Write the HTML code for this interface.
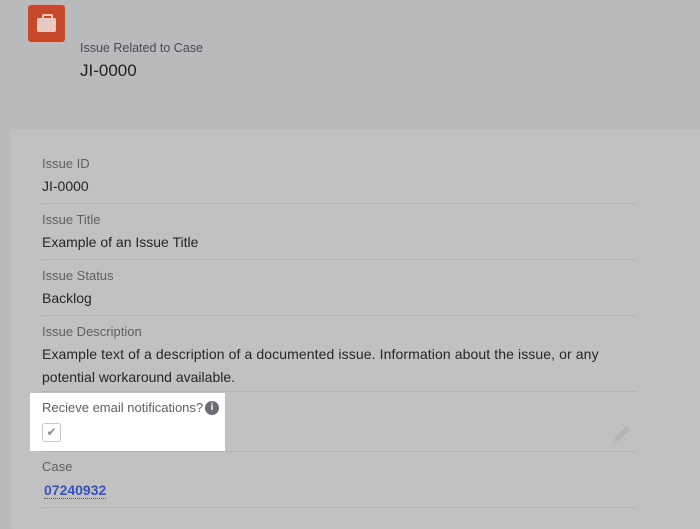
<!DOCTYPE html>
<html><head><style>
body{margin:0;width:700px;height:522px;background:#b9babc;font-family:"Liberation Sans",sans-serif;position:relative;overflow:hidden}
.icon{position:absolute;left:28px;top:5px;width:37px;height:37px;background:#c5492a;border-radius:3px}
.t{position:absolute;white-space:nowrap}
.card{position:absolute;left:10px;top:129px;width:700px;height:400px;background:#c1c1c1;border-radius:4px}
.line{position:absolute;left:42px;width:595px;height:1px;background:#b3b3b3}
.lab{color:#5f5f62;font-size:13px}
.val{color:#26262a;font-size:14px}
</style></head><body>
<div class="icon"><div style="position:absolute;left:9px;top:13px;width:19px;height:14px;background:#e8c9c0;border-radius:2px"></div><div style="position:absolute;left:14px;top:9px;width:7px;height:4px;border:2px solid #e8c9c0;border-bottom:none;border-radius:2px 2px 0 0"></div></div>
<div class="t" style="left:80px;top:41px;font-size:12.5px;color:#4a4a50">Issue Related to Case</div>
<div class="t" style="left:80px;top:61px;font-size:17px;color:#222">JI-0000</div>
<div class="card"></div>
<div class="t lab" style="left:42px;top:156px">Issue ID</div>
<div class="t val" style="left:42px;top:178px">JI-0000</div>
<div class="line" style="top:203px"></div>
<div class="t lab" style="left:42px;top:212px">Issue Title</div>
<div class="t val" style="left:42px;top:234px">Example of an Issue Title</div>
<div class="line" style="top:259px"></div>
<div class="t lab" style="left:42px;top:268px">Issue Status</div>
<div class="t val" style="left:42px;top:290px">Backlog</div>
<div class="line" style="top:315px"></div>
<div class="t lab" style="left:42px;top:324px">Issue Description</div>
<div class="t val" style="left:42px;top:346px;letter-spacing:0.1px">Example text of a description of a documented issue. Information about the issue, or any</div>
<div class="t val" style="left:42px;top:369px">potential workaround available.</div>
<div class="line" style="top:391px"></div>
<div style="position:absolute;left:30px;top:393px;width:195px;height:58px;background:#fff"></div>
<div class="t lab" style="left:42px;top:400px">Recieve email notifications?</div>
<div style="position:absolute;left:205px;top:401px;width:14px;height:14px;border-radius:50%;background:#6b6b73;color:#fff;font-size:10px;font-weight:bold;text-align:center;line-height:14px">i</div>
<div style="position:absolute;left:42px;top:423px;width:17px;height:17px;border:1px solid #c8c8c8;border-radius:3px;color:#8a8a8a;font-size:12px;text-align:center;line-height:17px">✔</div>
<svg style="position:absolute;left:612px;top:424px" width="20" height="20" viewBox="0 0 20 20"><path d="M2 18 L4 12 L14 2 L18 6 L8 16 Z" fill="#b3b3b3"/></svg>
<div class="line" style="top:451px"></div>
<div class="t lab" style="left:42px;top:459px">Case</div>
<div class="t" style="left:44px;top:482px;font-size:14px;font-weight:bold;color:#3552c4;border-bottom:1px dotted #3552c4;line-height:16px">07240932</div>
<div class="line" style="top:507px"></div>
</body></html>
